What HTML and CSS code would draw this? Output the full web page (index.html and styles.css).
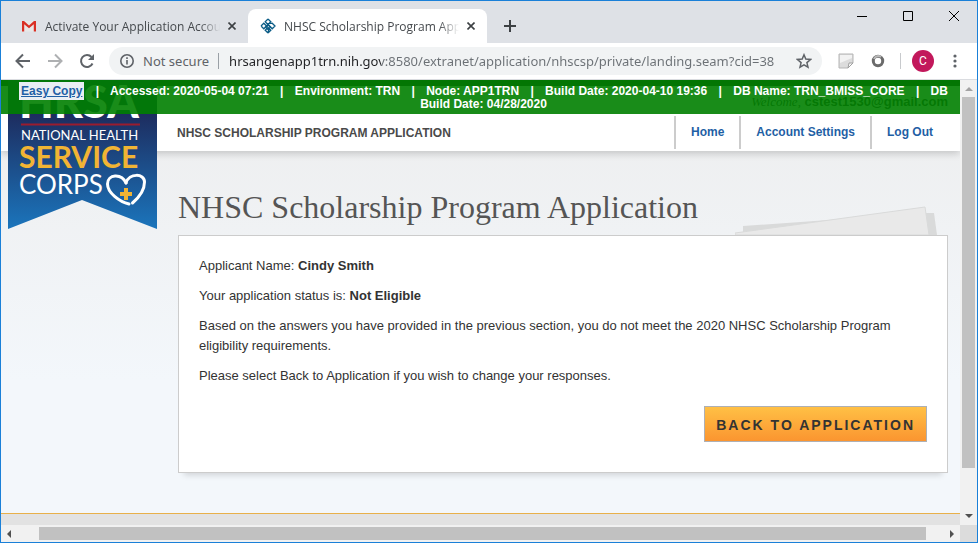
FILE: index.html
```html
<!DOCTYPE html>
<html lang="en">
<head>
  <meta charset="UTF-8">
  <meta name="viewport" content="width=device-width, initial-scale=1">
  <title>NHSC Scholarship Program Application</title>
  <link rel="stylesheet" href="styles.css">
</head>
<body>

<div class="window">

  <!-- tab strip -->
  <div class="tab-strip">
    <div class="tab">
      <svg class="favicon" viewBox="0 0 16 16">
        <path d="M1 3h14v10.500H1z" fill="#e8e8e8"/>
        <path d="M1 3h2l5 4.500L13 3h2v10.500h-2.200V6.200L8 10.300 3.200 6.200v7.300H1z" fill="#d93025"/>
      </svg>
      <span class="tab-title">Activate Your Application Account</span>
      <button class="tab-close" aria-label="Close tab">
        <svg viewBox="0 0 8 8"><path d="M0.500 0.500l7 7M7.500 0.500l-7 7"/></svg>
      </button>
    </div>
    <div class="tab active">
      <svg class="favicon" viewBox="0 0 16 16" fill="none" stroke="#0b5c86" stroke-width="1.300">
        <path d="M8 1l2.800 2.800L5.500 9 8 11.500M8 1L5.200 3.800 10.500 9 8 11.500"/>
        <path d="M1 8l2.800-2.800L9 10.500l-1 4.500M1 8l2.800 2.800L9 5.500l3.200-.3L15 8l-2.800 2.800L7 5.500M8 15l-2.800-2.800L7 10.500M8 15l2.800-2.800L9 10.500"/>
      </svg>
      <span class="tab-title">NHSC Scholarship Program Application</span>
      <button class="tab-close" aria-label="Close tab">
        <svg viewBox="0 0 8 8"><path d="M0.500 0.500l7 7M7.500 0.500l-7 7"/></svg>
      </button>
    </div>
    <button class="new-tab" aria-label="New tab">
      <svg viewBox="0 0 12 12"><path d="M6 0v12M0 6h12"/></svg>
    </button>
    <div class="window-controls">
      <button aria-label="Minimize"><svg viewBox="0 0 10 10"><path d="M0 5.500h10"/></svg></button>
      <button aria-label="Maximize"><svg viewBox="0 0 10 10"><path d="M.5.5h9v9h-9z"/></svg></button>
      <button aria-label="Close"><svg viewBox="0 0 10 10"><path d="M0 0l10 10M10 0L0 10"/></svg></button>
    </div>
  </div>

  <!-- toolbar -->
  <div class="toolbar">
    <div class="tools">
      <button aria-label="Back">
        <svg viewBox="0 0 16 16"><path d="M15 8H2M8 1.500L1.500 8 8 14.500"/></svg>
      </button>
      <button class="faded" aria-label="Forward">
        <svg viewBox="0 0 16 16"><path d="M1 8h13M8 1.500L14.500 8 8 14.500"/></svg>
      </button>
      <button aria-label="Reload">
        <svg viewBox="0 0 16 16"><path d="M13.500 10.500A6 6 0 1 1 12.500 4"/><path class="solid" d="M15 1v6H9z"/></svg>
      </button>
    </div>
    <div class="omnibox">
      <svg class="info" viewBox="0 0 16 16"><circle cx="8" cy="8" r="6.200"/><path d="M8 7v4.500M8 4.300v1.700"/></svg>
      <label class="security" for="url">Not secure</label>
      <input class="url" id="url" type="text" value="hrsangenapp1trn.nih.gov:8580/extranet/application/nhscsp/private/landing.seam?cid=38">
      <button class="star" aria-label="Bookmark this page">
        <svg viewBox="0 0 16 16"><path d="M8 1.800l1.800 4.300 4.700.4-3.600 3.100 1.100 4.600L8 11.800l-4 2.400 1.100-4.600L1.500 6.500l4.700-.4z"/></svg>
      </button>
    </div>
    <button class="extension" aria-label="Notes extension">
      <svg viewBox="0 0 16 16">
        <path d="M1 1h14v9l-5 5H1z" fill="#dcdcdc" stroke="#b5b5b5"/>
        <path d="M2 2h12v3L2 10z" fill="#f2f2f2"/>
        <path d="M15 10h-4l-1 5z" fill="#fafafa" stroke="#a0a0a0"/>
      </svg>
    </button>
    <button class="extension" aria-label="Lens extension">
      <svg viewBox="0 0 16 16">
        <circle cx="8" cy="8" r="4.700" fill="#fff" stroke="#6b6b6b" stroke-width="3"/>
        <path d="M4 6a4.600 4.600 0 0 1 7-2" fill="none" stroke="#b8b8b8" stroke-width="2"/>
      </svg>
    </button>
    <span class="divider"></span>
    <button class="avatar">C</button>
    <button class="menu" aria-label="Menu">
      <svg viewBox="0 0 4 14"><circle cx="2" cy="2" r="1.600"/><circle cx="2" cy="7" r="1.600"/><circle cx="2" cy="12" r="1.600"/></svg>
    </button>
  </div>

  <!-- page -->
  <div class="viewport">
    <div class="page">
      <header class="site-header">
        <div class="welcome"><em>Welcome,</em> <strong>cstest1530@gmail.com</strong></div>
        <div class="nav-row">
          <span class="app-name">NHSC SCHOLARSHIP PROGRAM APPLICATION</span>
          <nav class="site-nav">
            <a href="#">Home</a>
            <a href="#">Account Settings</a>
            <a href="#">Log Out</a>
          </nav>
        </div>
      </header>

      <svg class="logo" viewBox="0 0 149 149" role="img" aria-label="HRSA National Health Service Corps">
        <defs>
          <linearGradient id="ribbon" x1="0" y1="0" x2="0" y2="1">
            <stop offset="0.200" stop-color="#1d2a5c"/>
            <stop offset="1" stop-color="#1b75bc"/>
          </linearGradient>
        </defs>
        <path d="M0 0h149v149L74 120 0 149z" fill="url(#ribbon)"/>
        <text class="logo-hrsa" x="11" y="38">HRSA</text>
        <path d="M13 44.500h119" stroke="#9b1c2e" stroke-width="2"/>
        <text class="logo-national" x="13" y="60">NATIONAL HEALTH</text>
        <text class="logo-service" x="11" y="88">SERVICE</text>
        <text class="logo-corps" x="11" y="114">CORPS</text>
        <path d="M121 124C112 122 99.500 113 99.500 104c0-10 14-11 18.500-1" fill="none" stroke="#fff" stroke-width="3" stroke-linecap="round"/>
        <path d="M118 103c3-10 18.500-10 18.500-1 0 8-5 15-12 21" fill="none" stroke="#fff" stroke-width="3" stroke-linecap="round"/>
        <path d="M116 108h4v4h4v4h-4v4h-4v-4h-4v-4h4z" fill="#f1b434"/>
      </svg>

      <main class="content">
        <div class="title-row">
          <h1>NHSC Scholarship Program Application</h1>
          <svg class="papers" viewBox="0 0 204 29">
            <path d="M8 29v-9l184-13h7l3 22z" fill="#d9dada"/>
            <path d="M0 27L190 1l4 28H0z" fill="#e9e9e9" stroke="#d9dada"/>
          </svg>
        </div>
        <section class="card">
          <p>Applicant Name: <strong>Cindy Smith</strong></p>
          <p>Your application status is: <strong>Not Eligible</strong></p>
          <p>Based on the answers you have provided in the previous section, you do not meet the 2020 NHSC Scholarship Program eligibility requirements.</p>
          <p>Please select Back to Application if you wish to change your responses.</p>
          <div class="actions">
            <button class="back-button">BACK TO APPLICATION</button>
          </div>
        </section>
      </main>

      <footer class="site-footer"></footer>

      <div class="env-bar">
        <a class="easy-copy" href="#">Easy Copy</a>
        <span class="sep">|</span> Accessed: 2020-05-04 07:21
        <span class="sep">|</span> Environment: TRN
        <span class="sep">|</span> Node: APP1TRN
        <span class="sep">|</span> Build Date: 2020-04-10 19:36
        <span class="sep">|</span> DB Name: TRN_BMISS_CORE
        <span class="sep">|</span> DB Build Date: 04/28/2020
      </div>
    </div>

    <div class="scroll-y">
      <svg class="up" viewBox="0 0 8 4"><path d="M0 4l4-4 4 4z"/></svg>
      <div class="thumb"></div>
      <svg class="down" viewBox="0 0 8 4"><path d="M0 0l4 4 4-4z"/></svg>
    </div>
  </div>

  <div class="scroll-x">
    <svg viewBox="0 0 4 8"><path d="M4 0L0 4l4 4z"/></svg>
    <div class="thumb"></div>
    <svg viewBox="0 0 4 8"><path d="M0 0l4 4-4 4z"/></svg>
    <span class="corner"></span>
  </div>

</div>

</body>
</html>
```
FILE: styles.css
```css
* {
  box-sizing: border-box;
}

body {
  margin: 0;
  font-family: "Liberation Sans", Arial, sans-serif;
  color: #333;
}

button {
  padding: 0;
  border: 0;
  background: none;
  font-family: inherit;
  cursor: pointer;
}

svg {
  display: block;
}

.window {
  display: flex;
  flex-direction: column;
  height: 100vh;
  border: 1px solid #1a80d8;
  overflow: hidden;
}

/* tab strip */
.tab-strip {
  display: flex;
  flex: none;
  height: 42px;
  padding: 8px 0 0 8px;
  background: #dee1e6;
}

.tab {
  display: flex;
  align-items: center;
  width: 239px;
  padding: 0 8px 0 12px;
  font: 12px "Open Sans", sans-serif;
  color: #45494d;
}

.tab.active {
  border-radius: 8px 8px 0 0;
  background: #fff;
}

.favicon {
  flex: none;
  width: 16px;
  height: 16px;
}

.tab-title {
  flex: 1;
  margin: 0 4px 0 8px;
  overflow: hidden;
  white-space: nowrap;
  -webkit-mask-image: linear-gradient(to left, transparent, #000 20px);
  mask-image: linear-gradient(to left, transparent, #000 20px);
}

.tab-close {
  width: 16px;
  height: 16px;
}

.tab-close svg {
  width: 8px;
  height: 8px;
  margin: auto;
  stroke: #3c4043;
  stroke-width: 1.6;
}

.new-tab {
  width: 46px;
}

.new-tab svg {
  width: 12px;
  height: 12px;
  margin: auto;
  stroke: #3c4043;
  stroke-width: 2;
}

.window-controls {
  display: flex;
  align-items: flex-start;
  margin-left: auto;
}

.window-controls button {
  width: 46px;
  height: 13px;
}

.window-controls svg {
  width: 10px;
  height: 10px;
  margin: auto;
  fill: none;
  stroke: #000;
}

/* toolbar */
.toolbar {
  display: flex;
  flex: none;
  align-items: center;
  height: 37px;
  padding: 0 20px 0 14px;
  border-bottom: 1px solid #dadce0;
  background: #fff;
}

.tools {
  display: flex;
  gap: 16px;
  margin-right: 14px;
}

.tools svg {
  width: 16px;
  height: 16px;
  fill: none;
  stroke: #5f6368;
  stroke-width: 2;
}

.tools .solid {
  fill: #5f6368;
  stroke: none;
}

.faded {
  opacity: 0.5;
}

.omnibox {
  display: flex;
  flex: 1;
  align-items: center;
  height: 28px;
  padding: 0 10px;
  border-radius: 14px;
  background: #f1f3f4;
  font: 13px "Noto Sans", sans-serif;
}

.info {
  width: 16px;
  height: 16px;
  fill: none;
  stroke: #5f6368;
  stroke-width: 1.6;
}

.security {
  margin-left: 8px;
  padding-right: 9px;
  border-right: 1px solid #9aa0a6;
  line-height: 16px;
  color: #5f6368;
}

/* host part dark, path part grey */
.url {
  flex: 1;
  min-width: 0;
  padding: 0;
  border: 0;
  margin-left: 10px;
  background: linear-gradient(90deg, #202124 152px, #6b7075 152px);
  -webkit-background-clip: text;
  background-clip: text;
  -webkit-text-fill-color: transparent;
  font: inherit;
  color: #202124;
}

.star svg {
  width: 16px;
  height: 16px;
  fill: none;
  stroke: #5f6368;
  stroke-width: 1.5;
}

.extension {
  margin-left: 16px;
}

.extension svg {
  width: 16px;
  height: 16px;
}

.divider {
  width: 1px;
  height: 16px;
  margin: 0 11px 0 14px;
  background: #c8cacd;
}

.avatar {
  width: 22px;
  height: 22px;
  border-radius: 50%;
  background: #c2185b;
  font: 12px Roboto, sans-serif;
  color: #fff;
}

.menu {
  margin-left: 19px;
}

.menu svg {
  width: 4px;
  height: 14px;
  fill: #5f6368;
}

/* page */
.viewport {
  display: flex;
  flex: 1;
  min-height: 0;
}

.page {
  position: relative;
  display: flex;
  flex: 1;
  flex-direction: column;
  min-width: 0;
  overflow: hidden;
  background: linear-gradient(#eeeff0 60px, #f3f7fb 300px);
}

.site-header {
  flex: none;
  padding: 8px 12px 0 176px;
  border-top: 6px solid #222;
  background: #fff;
  box-shadow: 0 2px 8px rgba(0, 0, 0, 0.2);
}

.welcome {
  text-align: right;
  font-size: 13px;
  line-height: 16px;
}

.welcome em {
  font-family: "Liberation Serif", serif;
}

.nav-row {
  display: flex;
  align-items: center;
  justify-content: space-between;
  padding: 6px 0 2px;
}

.app-name {
  font-size: 12px;
  font-weight: bold;
  color: #4a4a4a;
}

.site-nav {
  display: flex;
}

.site-nav a {
  padding: 0 15px;
  border-left: 2px solid #ccc;
  font-size: 12px;
  font-weight: bold;
  line-height: 33px;
  color: #1f5fa5;
  text-decoration: none;
}

.logo {
  position: absolute;
  top: 0;
  left: 7px;
  width: 149px;
  height: 149px;
}

.logo text {
  font-family: Lato, sans-serif;
  fill: #fff;
}

.logo .logo-hrsa {
  font-size: 45px;
  font-weight: 900;
}

.logo .logo-national {
  font-size: 13px;
}

.logo .logo-service {
  font-size: 30px;
  font-weight: bold;
  fill: #f1b434;
}

.logo .logo-corps {
  font-size: 26px;
}

.content {
  flex: 1;
  padding: 36px 12px 0 177px;
}

.title-row {
  display: flex;
  align-items: flex-end;
  justify-content: space-between;
}

h1 {
  margin: 0 0 8px;
  font: 32px/40px "Liberation Serif", serif;
  white-space: nowrap;
  color: #555;
}

.papers {
  width: 204px;
  height: 29px;
  margin-right: 9px;
}

.card {
  padding: 20px;
  padding-bottom: 30px;
  border: 1px solid #ccc;
  background: #fff;
  box-shadow: 0 8px 6px -6px rgba(0, 0, 0, 0.15);
  font-size: 13px;
  line-height: 20px;
}

.card p {
  margin: 0 0 10px;
}

.actions {
  display: flex;
  justify-content: flex-end;
  padding-top: 10px;
}

.back-button {
  height: 36px;
  padding: 2px 11px 0;
  border: 1px solid #aeb0b5;
  background: linear-gradient(#ffc045, #fb9530);
  font-size: 14px;
  font-weight: bold;
  letter-spacing: 2px;
  color: #333;
}

.site-footer {
  flex: none;
  height: 12px;
  border-top: 1px solid #e8b04a;
  background: #e2e2e2;
}

.env-bar {
  position: absolute;
  top: 0;
  left: 0;
  right: 0;
  padding: 5px 10px 3px 16px;
  background: rgba(0, 128, 0, 0.9);
  font-size: 12px;
  font-weight: bold;
  line-height: 13px;
  text-align: center;
  color: #fff;
}

.sep {
  margin: 0 8px;
}

.easy-copy {
  padding: 2px;
  background: #e9eef3;
  color: #1f5fa5;
}

/* scrollbars */
.scroll-y {
  display: flex;
  flex-direction: column;
  align-items: center;
  width: 17px;
  padding: 7px 0;
  background: #f1f1f1;
}

.scroll-y svg {
  width: 8px;
  height: 4px;
}

.scroll-y .up {
  fill: #a3a3a3;
}

.scroll-y .down {
  margin-top: auto;
  fill: #505050;
}

.scroll-y .thumb {
  width: 13px;
  height: 86%;
  margin-top: 6px;
  background: #c1c1c1;
}

.scroll-x {
  display: flex;
  flex: none;
  align-items: center;
  height: 17px;
  padding-left: 6px;
  background: #f1f1f1;
}

.scroll-x svg {
  width: 4px;
  height: 8px;
  fill: #505050;
}

.scroll-x .thumb {
  flex: 1;
  height: 13px;
  margin: 0 24px 0 28px;
  background: #c1c1c1;
}

.corner {
  width: 17px;
  height: 17px;
  margin-left: 6px;
  background: #dcdcdc;
}
```
